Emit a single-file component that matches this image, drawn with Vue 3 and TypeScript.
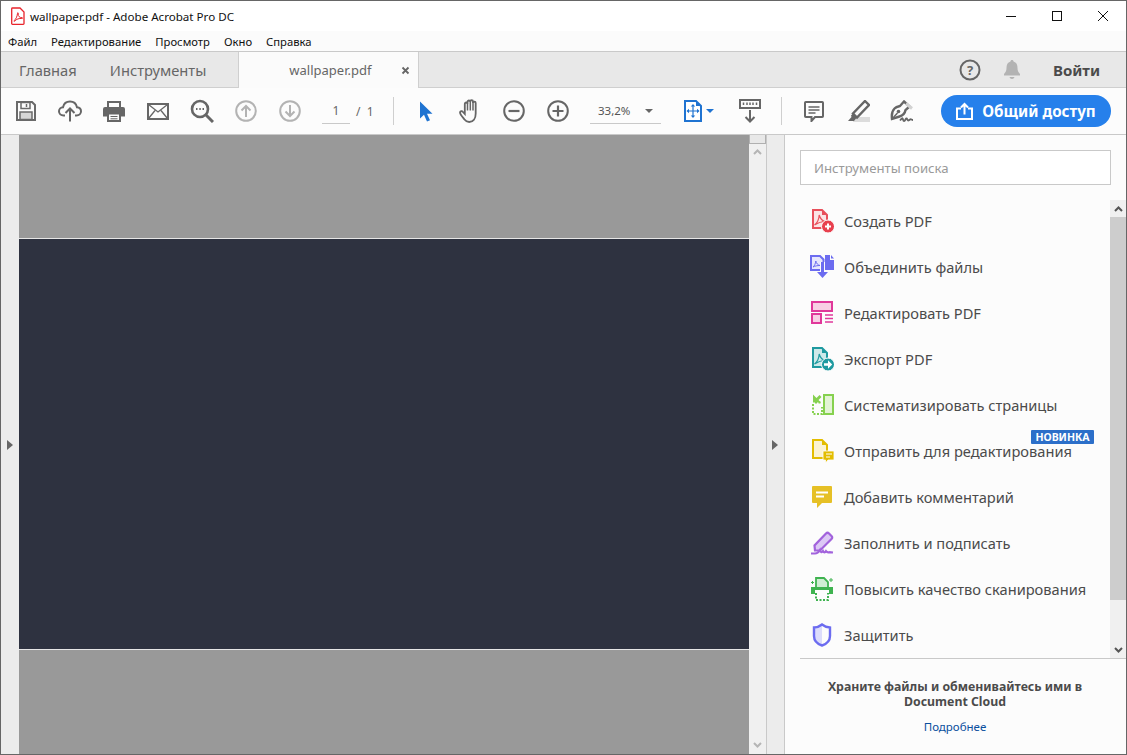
<script setup lang="ts">
const menus: string[] = ['Файл', 'Редактирование', 'Просмотр', 'Окно', 'Справка']
</script>

<template>
  <div class="win">
    <header class="titlebar">
      <svg class="appicon" width="14" height="18" viewBox="0 0 14 18">
        <path d="M1.500 1h7.500l4 4v11.500a.8.8 0 0 1-.8.8H1.500a.8.8 0 0 1-.8-.8V1.800a.8.8 0 0 1 .8-.8z" fill="#fff" stroke="#e8242c" stroke-width="1.300" />
        <path d="M3.200 13.500c1.500-.8 3-4 3.300-7 .2-1.500 1-.8.7.5-.5 2 1.500 3.700 3.800 3.700 1 0 .8.900-.2.800-2.500-.3-5.300.5-7.200 2.600-.6.600-1 .1-.4-.6z" fill="none" stroke="#e8242c" stroke-width="1" />
      </svg>
      <span class="wintitle">wallpaper.pdf - Adobe Acrobat Pro DC</span>
      <div class="caption">
        <svg width="12" height="12" viewBox="0 0 12 12"><path d="M1 6.500h10" stroke="#111" /></svg>
        <svg width="12" height="12" viewBox="0 0 12 12"><rect x="1.500" y="1.500" width="9" height="9" fill="none" stroke="#111" /></svg>
        <svg width="12" height="12" viewBox="0 0 12 12"><path d="M1 1l10 10M11 1L1 11" stroke="#111" fill="none" /></svg>
      </div>
    </header>

    <nav class="menubar">
      <span v-for="m in menus" :key="m">{{ m }}</span>
    </nav>

    <div class="tabbar">
      <span class="tab home">Главная</span>
      <span class="tab tools">Инструменты</span>
      <div class="filetab">
        <span class="filename">wallpaper.pdf</span>
        <svg class="close" width="9" height="9" viewBox="0 0 9 9"><path d="M1.500 1.500l6 6M7.500 1.500l-6 6" stroke="#666" stroke-width="1.800" /></svg>
      </div>
      <div class="tabright">
        <svg width="22" height="22" viewBox="0 0 22 22">
          <circle cx="11" cy="11" r="9.500" fill="none" stroke="#666" stroke-width="2" />
          <text x="11" y="15.500" text-anchor="middle" class="qmark">?</text>
        </svg>
        <svg class="bell" width="18" height="21" viewBox="0 0 18 21">
          <path d="M9 1c1 0 1.500.6 1.500 1.500C13.500 3.300 14.500 5.800 14.500 9c0 3 1 4.500 2.500 6v1.500H1V15c1.500-1.500 2.500-3 2.500-6 0-3.200 1-5.700 4-6.500C7.500 1.600 8 1 9 1z" fill="#b3b3b3" />
          <path d="M6.500 18h5c-.3 1.300-1.300 2-2.500 2s-2.200-.7-2.500-2z" fill="#b3b3b3" />
        </svg>
        <span class="login">Войти</span>
      </div>
    </div>

    <div class="toolbar">
      <button class="tb">
        <svg width="20" height="20" viewBox="0 0 20 20"><path d="M1 1h15l3 3v15H1z" fill="none" stroke="#6a6a6a" stroke-width="2" /><rect x="5" y="1.500" width="9" height="6" fill="none" stroke="#6a6a6a" stroke-width="1.500" /><path d="M10.500 3v3" stroke="#6a6a6a" stroke-width="1.500" /><rect x="4" y="11" width="12" height="7.500" fill="#d6d6d6" stroke="#6a6a6a" stroke-width="1.500" /></svg>
      </button>
      <button class="tb">
        <svg width="24" height="22" viewBox="0 0 24 22"><path d="M7 15.500H5.500C3 15.500 1 13.700 1 11.300 1 9 2.800 7.300 5 7.200 5.800 3.700 8.500 1.500 12 1.500s6.200 2.300 7 5.700c2.200.2 4 1.900 4 4.100 0 2.400-2 4.200-4.500 4.200H17" fill="none" stroke="#666" stroke-width="2" /><path d="M12 21.500V8.500M7.500 13l4.500-4.500 4.500 4.500" fill="none" stroke="#666" stroke-width="2" /></svg>
      </button>
      <button class="tb">
        <svg width="22" height="21" viewBox="0 0 22 21"><path d="M5 6V1h12v5" fill="none" stroke="#666" stroke-width="2" /><path d="M2 6h18a2 2 0 0 1 2 2v7.500h-4.500V12h-13v3.500H0V8a2 2 0 0 1 2-2z" fill="#666" /><rect x="5" y="12.500" width="12" height="7.500" fill="none" stroke="#666" stroke-width="2" /><path d="M7.500 15.500h7M7.500 17.800h7" stroke="#666" /></svg>
      </button>
      <button class="tb">
        <svg width="22" height="17" viewBox="0 0 22 17"><rect x="1" y="1" width="20" height="15" fill="none" stroke="#666" stroke-width="2" /><path d="M1.500 1.500L11 9l9.500-7.500M1.500 15.500L8 7.500M20.500 15.500L14 7.500" fill="none" stroke="#666" stroke-width="1.300" /></svg>
      </button>
      <button class="tb">
        <svg width="24" height="24" viewBox="0 0 24 24"><circle cx="10" cy="10" r="8" fill="none" stroke="#666" stroke-width="2.600" /><path d="M15.800 15.800L23 23" stroke="#666" stroke-width="3" /><path d="M6 10h1.500M9.300 10h1.500M12.500 10H14" stroke="#666" stroke-width="1.800" /></svg>
      </button>
      <button class="tb">
        <svg width="22" height="22" viewBox="0 0 22 22"><circle cx="11" cy="11" r="9.800" fill="none" stroke="#b3b3b3" stroke-width="2" /><path d="M11 17V6M6.500 10.500L11 6l4.500 4.500" fill="none" stroke="#b3b3b3" stroke-width="2" /></svg>
      </button>
      <button class="tb">
        <svg width="22" height="22" viewBox="0 0 22 22"><circle cx="11" cy="11" r="9.800" fill="none" stroke="#b3b3b3" stroke-width="2" /><path d="M11 5v11M6.500 11.500L11 16l4.500-4.500" fill="none" stroke="#b3b3b3" stroke-width="2" /></svg>
      </button>
      <div class="pagefield">1</div>
      <span class="pagetotal">/&nbsp;&nbsp;1</span>
      <i class="sep first"></i>
      <button class="tb arrowbtn">
        <svg width="14" height="21" viewBox="0 0 14 21"><path d="M1 0.500v17l4-3.800 3 6.800 3-1.300-3-6.500h5.500z" fill="#1f73d1" /></svg>
      </button>
      <button class="tb">
        <svg width="23" height="24" viewBox="0 0 23 24"><path d="M5.500 20.500C4 18.500 1 15.500 1 13.500c0-1.500 2-1.700 3-.5l1.800 2V5c0-2 2.700-2 2.700 0V3c0-2 2.800-2 2.800 0v-.5c0-1.800 2.700-1.800 2.700 0V4c0-1.800 2.700-1.800 2.700 0v10.500c0 5-2.500 8.500-6.500 8.500-2.200 0-3.600-1-4.700-2.500z" fill="none" stroke="#666" stroke-width="1.800" /><path d="M8.500 5v6.500M11.300 3v8.500M14 2.500v9" stroke="#666" stroke-width="1.500" /></svg>
      </button>
      <button class="tb">
        <svg width="22" height="22" viewBox="0 0 22 22"><circle cx="11" cy="11" r="9.800" fill="none" stroke="#666" stroke-width="2" /><path d="M5.500 11h11" stroke="#666" stroke-width="2.200" /></svg>
      </button>
      <button class="tb">
        <svg width="22" height="22" viewBox="0 0 22 22"><circle cx="11" cy="11" r="9.800" fill="none" stroke="#666" stroke-width="2" /><path d="M5.500 11h11M11 5.500v11" stroke="#666" stroke-width="2.200" /></svg>
      </button>
      <div class="zoomfield"><span>33,2%</span><i class="caret"></i></div>
      <button class="tb fit">
        <svg width="18" height="22" viewBox="0 0 18 22"><path d="M1 1h11l5 5v15H1z" fill="#fff" stroke="#1f73d1" stroke-width="2" /><path d="M12 1v5h5z" fill="#1f73d1" /><path d="M9 5.500v11M3.500 11h11" stroke="#1f73d1" stroke-width="1.200" /><path d="M9 4l2.200 2.500H6.800zM9 18l2.200-2.500H6.800zM2.500 11L5 8.800v4.400zM15.500 11L13 8.800v4.400z" fill="#1f73d1" /></svg>
        <i class="caret blue"></i>
      </button>
      <button class="tb ruler">
        <svg width="22" height="24" viewBox="0 0 22 24"><rect x="1" y="1" width="20" height="8" fill="none" stroke="#666" stroke-width="2" /><path d="M4.500 3.500v2.500M8 3.500v2.500M11 3.500v2.500M14 3.500v2.500M17.500 3.500v2.500" stroke="#666" stroke-width="1.500" /><path d="M11 11v11M6.500 18l4.500 4.500 4.500-4.500" fill="none" stroke="#666" stroke-width="2" /></svg>
      </button>
      <i class="sep second"></i>
      <button class="tb">
        <svg width="20" height="21" viewBox="0 0 20 21"><path d="M1.800 1h16.400a.8.8 0 0 1 .8.800v13.400a.8.8 0 0 1-.8.800H11l-3.500 4v-4H1.800a.8.8 0 0 1-.8-.8V1.800a.8.8 0 0 1 .8-.8z" fill="none" stroke="#666" stroke-width="2" /><path d="M4.500 6h11M4.500 9h11M4.500 12h7" stroke="#666" stroke-width="1.300" /></svg>
      </button>
      <button class="tb">
        <svg width="23" height="22" viewBox="0 0 23 22"><rect x="6" y="17" width="17" height="5" fill="#dcdcdc" /><path d="M18 1l4 4L10 17.500l-4-4z" fill="none" stroke="#666" stroke-width="2.400" /><path d="M6 13.500l-2 2 .5 1.500L1 21h6l2-2.500 1-1z" fill="#666" /></svg>
      </button>
      <button class="tb">
        <svg width="24" height="23" viewBox="0 0 24 23"><path d="M14 1.500l5.500 5-4 3.500c-.5 3-2.500 5.500-6 6.500L2 19c-.5-4 .5-8.500 2.500-10.500 1-1.200 3-2 5.500-2.500z" fill="none" stroke="#666" stroke-width="2.400" /><path d="M2 19l5.500-6" stroke="#666" stroke-width="1.500" /><circle cx="8.500" cy="11.500" r="1.800" fill="#666" /><path d="M16 3.500l6 5" stroke="#d2d2d2" stroke-width="3" /><path d="M10 20.500c2-2.500 2.500-3 3-1s1.500 2 2.500 0 1.500-1 2 .3 1.500.5 2.500-.3 1.500.5 3 .5" fill="none" stroke="#666" stroke-width="1.800" /></svg>
      </button>
      <button class="share">
        <svg width="17" height="18" viewBox="0 0 17 18"><path d="M5 6.500H1v10.500h15V6.500h-4" fill="none" stroke="#fff" stroke-width="2" /><path d="M8.500 12.500V2M5 5.500L8.500 2 12 5.500" fill="none" stroke="#fff" stroke-width="2" /></svg>
        <span>Общий доступ</span>
      </button>
    </div>

    <main class="body">
      <aside class="leftpane"><i class="tri"></i></aside>
      <section class="doc">
        <div class="page"></div>
      </section>
      <div class="docscroll">
        <div class="grip"></div>
        <svg class="chev up" width="9" height="6" viewBox="0 0 9 6"><path d="M1 5l3.500-3.500L8 5" fill="none" stroke="#b5b5b5" stroke-width="2" /></svg>
        <svg class="chev" width="9" height="6" viewBox="0 0 9 6"><path d="M1 1l3.500 3.500L8 1" fill="none" stroke="#b5b5b5" stroke-width="2" /></svg>
      </div>
      <div class="handle"><i class="tri"></i></div>

      <aside class="panel">
        <div class="searchwrap"><div class="search">Инструменты поиска</div></div>
        <div class="listwrap">
          <ul class="list">
            <li>
              <svg width="24" height="24" viewBox="0 0 24 24"><path d="M3 1h9l5 5v13H3z" fill="#fbe4e5" stroke="#e8505b" stroke-width="2" /><path d="M12 1v5h5z" fill="#e8505b" /><path d="M4.500 16c2.500-2 4.500-6 4.700-10 1 3.500 3 6 6.300 6.500-4.500 0-8 1.500-11 3.500z" fill="none" stroke="#e8505b" stroke-width="1.200" /><circle cx="18" cy="17.500" r="6.500" fill="#e8404e" stroke="#fcfcfc" stroke-width="1" /><path d="M15 17.500h6M18 14.500v6" stroke="#fff" stroke-width="2" /></svg>
              <span>Создать PDF</span>
            </li>
            <li>
              <svg width="24" height="24" viewBox="0 0 24 24"><path d="M1 1h9l3.500 3.500V15H1z" fill="#e6e6fd" stroke="#6c6cf0" stroke-width="2" /><path d="M15 0h5v5h4v10h-9z" fill="#6c6cf0" /><path d="M21 0l3 3.500h-3z" fill="#6c6cf0" /><path d="M3 12c1.500-1 2.500-3.500 2.800-6 .6 2.500 2 4 4.200 4.500-2.800 0-5 .5-7 1.500z" fill="none" stroke="#6c6cf0" /><path d="M12.500 7v11" stroke="#fcfcfc" stroke-width="5" /><path d="M12.500 7v11" stroke="#6c6cf0" stroke-width="3" /><path d="M7 17h11l-5.500 6z" fill="#6c6cf0" /></svg>
              <span>Объединить файлы</span>
            </li>
            <li>
              <svg width="24" height="24" viewBox="0 0 24 24"><rect x="2" y="1" width="20" height="9" fill="#f8cfe4" stroke="#e0389a" stroke-width="2" /><rect x="2" y="13" width="9" height="9" fill="#f8cfe4" stroke="#e0389a" stroke-width="2" /><path d="M15 14h8M15 17.500h8M15 21h8" stroke="#e0389a" stroke-width="1.300" /></svg>
              <span>Редактировать PDF</span>
            </li>
            <li>
              <svg width="24" height="24" viewBox="0 0 24 24"><path d="M3 1h9l5 5v14H3z" fill="#cde9e9" stroke="#1f9aa0" stroke-width="2" /><path d="M12 1v5h5z" fill="#1f9aa0" /><path d="M4.500 17c2.500-2 4.500-6 4.700-10 1 3.500 3 6 6.300 6.500-4.500 0-8 1.500-11 3.500z" fill="none" stroke="#1f9aa0" stroke-width="1.200" /><circle cx="18" cy="17.500" r="6.500" fill="#1f9aa0" stroke="#fcfcfc" stroke-width="1" /><path d="M14 16.300h4v-3l4.200 4.200-4.200 4.200v-3h-4z" fill="#fff" /></svg>
              <span>Экспорт PDF</span>
            </li>
            <li>
              <svg width="24" height="24" viewBox="0 0 24 24"><rect x="14" y="2" width="9" height="19" fill="#e3f4d5" stroke="#86d14f" stroke-width="2" /><path d="M3 11v10h9v-7" fill="none" stroke="#86d14f" stroke-width="2" stroke-dasharray="2 1.500" /><path d="M5 9.500h7" stroke="#86d14f" stroke-width="2" stroke-dasharray="2 1.500" /><path d="M3 1.500v8h8L8.500 7l3-3-2-2-3 3z" fill="#86d14f" /></svg>
              <span>Систематизировать страницы</span>
            </li>
            <li class="hasbadge">
              <svg width="24" height="24" viewBox="0 0 24 24"><path d="M3 1h9l5 5v13H3z" fill="#fbf3d2" stroke="#e3bd00" stroke-width="2" /><path d="M12 1v5h5z" fill="#e3bd00" /><path d="M13 12h11v9h-6l-2.500 3v-3H13z" fill="#e3bd00" stroke="#fcfcfc" stroke-width=".8" /><path d="M16 15h6M16 18h4" stroke="#fff" /></svg>
              <span>Отправить для редактирования</span>
              <em class="badge">НОВИНКА</em>
            </li>
            <li>
              <svg width="24" height="24" viewBox="0 0 24 24"><path d="M3 1h18a1 1 0 0 1 1 1v15a1 1 0 0 1-1 1H12l-5 5v-5H3a1 1 0 0 1-1-1V2a1 1 0 0 1 1-1z" fill="#e6c026" /><path d="M6 7.500h12M6 11.500h8" stroke="#fff" stroke-width="2" /></svg>
              <span>Добавить комментарий</span>
            </li>
            <li>
              <svg width="24" height="24" viewBox="0 0 24 24"><path d="M16 2.500c1-1 2-1 3 0l2.500 2.500c1 1 1 2 0 3L10 19.500H5l-.5-5z" fill="#dcc8f5" stroke="#a263dc" stroke-width="2.200" /><path d="M1 22.500h4c2 0 3.500-1 5-3.500.8 2.500 1.800 3 3 1 1 1.800 2 1.800 3 .2 1 1.300 2 1.500 3.500 1l3.500.3" fill="none" stroke="#a263dc" stroke-width="2.200" /></svg>
              <span>Заполнить и подписать</span>
            </li>
            <li>
              <svg width="24" height="24" viewBox="0 0 24 24"><path d="M6 1h8l4 4v7H6z" fill="#cfeed3" stroke="#3fb350" stroke-width="1.800" /><path d="M1 10h22v7h-4v-4H5v4H1z" fill="#3fb350" /><path d="M6 16v7h12v-7" fill="none" stroke="#3fb350" stroke-width="2" stroke-dasharray="2 1.500" /><path d="M21 1v4M19 3h4M2.500 4v3M1 5.500h3" stroke="#3fb350" /></svg>
              <span>Повысить качество сканирования</span>
            </li>
            <li>
              <svg width="24" height="24" viewBox="0 0 24 24"><path d="M12 1.500c2.500 2 5 2.800 8 3v8.500c0 4.500-3 7.800-8 9.500-5-1.700-8-5-8-9.500V4.500c3 0 5.500-1 8-3z" fill="#dcdcfb" /><path d="M12 2c2.500 2 5 2.500 8 2.500V13c0 4.500-3 7.800-8 9.500z" fill="#fcfcfc" /><path d="M12 1.500c2.500 2 5 2.800 8 3v8.500c0 4.500-3 7.800-8 9.500-5-1.700-8-5-8-9.500V4.500c3 0 5.500-1 8-3z" fill="none" stroke="#6c6cf0" stroke-width="2.400" /></svg>
              <span>Защитить</span>
            </li>
          </ul>
          <div class="panelscroll">
            <div class="btn"><svg width="9" height="6" viewBox="0 0 9 6"><path d="M1 5l3.500-3.500L8 5" fill="none" stroke="#555" stroke-width="2" /></svg></div>
            <div class="thumb"></div>
            <div class="btn"><svg width="9" height="6" viewBox="0 0 9 6"><path d="M1 1l3.500 3.500L8 1" fill="none" stroke="#555" stroke-width="2" /></svg></div>
          </div>
        </div>
        <footer class="promo">
          <p class="promotext">Храните файлы и обменивайтесь ими в<br />Document Cloud</p>
          <a class="more">Подробнее</a>
        </footer>
      </aside>
    </main>
  </div>
</template>

<style scoped>
.win {
  width: 1127px;
  height: 755px;
  box-sizing: border-box;
  border: 1px solid #666;
  display: flex;
  flex-direction: column;
  overflow: hidden;
  background: #fff;
  font-family: "Noto Sans", "Open Sans", sans-serif;
  color: #4b4b4b;
}
.titlebar {
  height: 30px;
  flex: none;
  display: flex;
  align-items: center;
  background: #fff;
  padding-left: 10px;
}
.appicon { flex: none; }
.wintitle {
  margin-left: 5px;
  font-size: 11.600px;
  color: #111;
}
.caption {
  margin-left: auto;
  display: flex;
  gap: 34px;
  padding-right: 17px;
}
.menubar {
  height: 20px;
  flex: none;
  background: #fbfbfb;
  border-bottom: 1px solid #c9c9c9;
  display: flex;
  align-items: center;
  padding-left: 7px;
  gap: 14px;
  font-size: 11.250px;
  color: #111;
}
.tabbar {
  height: 36px;
  flex: none;
  box-sizing: border-box;
  background: #e8e8e8;
  border-bottom: 1px solid #cfcfcf;
  display: flex;
  align-items: center;
  font-size: 14.700px;
  color: #666;
}
.tab.home { margin-left: 18px; }
.tab.tools { margin-left: 33px; }
.filetab {
  margin-left: 32px;
  align-self: stretch;
  width: 181px;
  height: 36px;
  box-sizing: border-box;
  background: #fbfbfb;
  border-left: 1px solid #cfcfcf;
  border-right: 1px solid #cfcfcf;
  display: flex;
  align-items: center;
  font-size: 13px;
  padding-left: 50px;
}
.close { margin-left: 30px; }
.tabright {
  margin-left: auto;
  display: flex;
  align-items: center;
  padding-right: 26px;
}
.bell { margin-left: 22px; }
.qmark {
  font-family: "Noto Sans", sans-serif;
  font-size: 13px;
  font-weight: 700;
  fill: #666;
}
.login {
  margin-left: 32px;
  font-size: 15px;
  font-weight: 700;
  color: #4b4b4b;
}
.toolbar {
  height: 47px;
  flex: none;
  box-sizing: border-box;
  background: #fcfcfc;
  border-bottom: 1px solid #c9c9c9;
  display: flex;
  align-items: center;
  padding-left: 3px;
}
.tb {
  width: 44px;
  height: 44px;
  flex: none;
  border: 0;
  padding: 0;
  background: none;
  display: flex;
  align-items: center;
  justify-content: center;
}
.pagefield {
  margin-left: 10px;
  width: 28px;
  height: 25px;
  box-sizing: border-box;
  border-bottom: 1px solid #c9c9c9;
  text-align: center;
  font-size: 12px;
  line-height: 24px;
  color: #666;
}
.pagetotal {
  margin-left: 6px;
  font-size: 12px;
  color: #666;
  width: 26px;
}
.sep {
  display: block;
  width: 1px;
  height: 28px;
  background: #cfcfcf;
  flex: none;
}
.sep.first { margin-left: 11px; }
.sep.second { margin: 0 10px 0 9px; }
.arrowbtn { margin-left: 10px; }
.zoomfield {
  margin-left: 10px;
  width: 71px;
  height: 25px;
  box-sizing: border-box;
  border-bottom: 1px solid #c9c9c9;
  display: flex;
  align-items: center;
  padding-left: 8px;
  font-size: 11.500px;
  color: #555;
}
.caret {
  width: 0;
  height: 0;
  border-left: 4px solid transparent;
  border-right: 4px solid transparent;
  border-top: 4px solid #666;
  margin-left: 15px;
}
.caret.blue {
  border-top-color: #1f73d1;
  margin-left: 4px;
}
.fit {
  margin-left: 23px;
  width: 40px;
  justify-content: flex-start;
}
.ruler { margin-left: 4px; }
.share {
  margin-left: 17px;
  width: 170px;
  height: 32px;
  border: 0;
  border-radius: 16px;
  background: #2680eb;
  color: #fff;
  display: flex;
  align-items: center;
  justify-content: center;
  gap: 9px;
  font-family: inherit;
  font-size: 15.200px;
  font-weight: 700;
}
.body {
  flex: 1;
  min-height: 0;
  display: flex;
}
.leftpane {
  width: 18px;
  flex: none;
  background: #ececec;
  display: flex;
  align-items: center;
  padding-left: 6px;
  box-sizing: border-box;
}
.tri {
  display: block;
  width: 0;
  height: 0;
  border-top: 5px solid transparent;
  border-bottom: 5px solid transparent;
  border-left: 6px solid #666;
}
.doc {
  width: 730px;
  flex: none;
  background: #999;
  padding-top: 103px;
  box-sizing: border-box;
}
.page {
  height: 412px;
  box-sizing: border-box;
  background: #2e3240;
  border-top: 1px solid #e6e6e6;
  border-bottom: 1px solid #e6e6e6;
}
.docscroll {
  width: 17px;
  flex: none;
  background: #f0f0f0;
  display: flex;
  flex-direction: column;
  align-items: center;
}
.grip {
  width: 100%;
  height: 9px;
  box-sizing: border-box;
  background: #e8e8e8;
  border: 1px solid #b0b0b0;
  border-top: 0;
}
.chev.up { margin-top: 5px; }
.chev:not(.up) { margin-top: auto; margin-bottom: 6px; }
.handle {
  width: 19px;
  flex: none;
  box-sizing: border-box;
  background: #ececec;
  border-left: 1px solid #c9c9c9;
  border-right: 1px solid #c9c9c9;
  display: flex;
  align-items: center;
  padding-left: 5px;
}
.panel {
  flex: 1;
  min-width: 0;
  background: #fcfcfc;
  display: flex;
  flex-direction: column;
}
.searchwrap {
  padding: 15px;
  flex: none;
}
.search {
  width: 311px;
  height: 35px;
  box-sizing: border-box;
  background: #fff;
  border: 1px solid #c9c9c9;
  font-size: 13.200px;
  line-height: 35px;
  padding-left: 13px;
  color: #9a9a9a;
}
.listwrap {
  height: 458px;
  flex: none;
  display: flex;
  margin-left: 15px;
  border-bottom: 1px solid #c9c9c9;
  box-sizing: content-box;
}
.list {
  list-style: none;
  margin: -2px 0 0;
  padding: 0;
  width: 310px;
  flex: none;
}
.list li {
  position: relative;
  height: 46px;
  display: flex;
  align-items: center;
  padding-left: 10px;
  gap: 10px;
  font-size: 14.650px;
  line-height: 15px;
  color: #4b4b4b;
}
.list li svg { flex: none; }
.badge {
  position: absolute;
  left: 231px;
  top: 2px;
  width: 63px;
  height: 14px;
  background: #2c6fc9;
  border-radius: 1px;
  color: #fff;
  font-style: normal;
  font-weight: 700;
  font-size: 10.500px;
  line-height: 14px;
  text-align: center;
}
.panelscroll {
  width: 16px;
  flex: none;
  display: flex;
  flex-direction: column;
  background: #f0f0f0;
}
.btn {
  height: 17px;
  display: flex;
  align-items: center;
  justify-content: center;
  flex: none;
}
.thumb {
  height: 383px;
  flex: none;
  background: #cdcdcd;
  margin-bottom: auto;
}
.promo {
  flex: 1;
  text-align: center;
  padding-right: 1px;
}
.promotext {
  margin: 20px 0 0;
  font-size: 12.300px;
  font-weight: 700;
  line-height: 15px;
  color: #4b4b4b;
}
.more {
  display: block;
  margin-top: 10px;
  font-size: 11.500px;
  color: #0b4f9e;
}
</style>

<style>
html, body { margin: 0; padding: 0; background: #fff; overflow: hidden; }
</style>
